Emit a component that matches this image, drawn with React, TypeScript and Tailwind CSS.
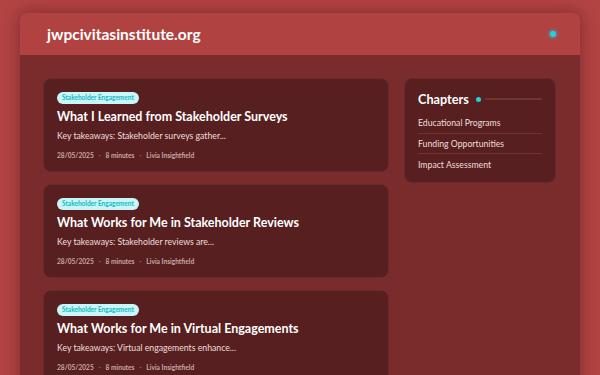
import React from "react";

const posts = [
  { title: "What I Learned from Stakeholder Surveys", excerpt: "Key takeaways: Stakeholder surveys gather..." },
  { title: "What Works for Me in Stakeholder Reviews", excerpt: "Key takeaways: Stakeholder reviews are..." },
  { title: "What Works for Me in Virtual Engagements", excerpt: "Key takeaways: Virtual engagements enhance..." },
];

export default function App() {
  return (
    <div
      className="w-[600px] h-[375px] overflow-hidden bg-[#b34444] px-[20px] pt-[13px]"
      style={{ fontFamily: "Lato, 'Noto Sans', sans-serif" }}
    >
      <div className="rounded-t-[6px] shadow-[0_0_18px_rgba(60,10,10,0.45)] overflow-hidden h-[400px] bg-[#7a2c2c]">
        <header className="h-[42px] bg-[#b04242] flex items-center justify-between pl-[27px] pr-[24px]">
          <span className="text-white font-bold text-[15.5px] leading-[20px]">jwpcivitasinstitute.org</span>
          <span className="w-[6px] h-[6px] rounded-full bg-[#1fd3db] shadow-[0_0_4px_#22d3ee]" />
        </header>
        <div className="flex gap-[15px] pl-[23px] pr-[24px] pt-[23px]">
          <div className="w-[346px] flex flex-col gap-[12px]">
            {posts.map((p) => (
              <article
                key={p.title}
                className="rounded-[8px] bg-[#571f1f] border border-[#6a2a2a] px-[13px] pt-[13px] h-[94px]"
              >
                <div className="flex">
                  <span className="flex items-center h-[12px] px-[5px] rounded-full bg-[#c9f6f8] text-[#14b8c4] text-[6.5px] leading-[12px] font-bold">
                    Stakeholder Engagement
                  </span>
                </div>
                <h2 className="text-white font-bold text-[12.5px] leading-[16px] mt-[5px]">{p.title}</h2>
                <p className="text-[#f0dede] text-[8.7px] leading-[12px] mt-[5px]">{p.excerpt}</p>
                <div className="flex items-center gap-[5px] text-[#c9a8a8] text-[6.6px] leading-[10px] font-bold mt-[8px]">
                  <span>28/05/2025</span>
                  <span className="text-[#9a6a6a]">·</span>
                  <span>8 minutes</span>
                  <span className="text-[#9a6a6a]">·</span>
                  <span>Livia Insightfield</span>
                </div>
              </article>
            ))}
          </div>
          <aside className="w-[152px] h-[105px] rounded-[8px] bg-[#571f1f] border border-[#6a2a2a] px-[13px] pt-[12px]">
            <div className="flex items-center gap-[4px]">
              <span className="text-white font-bold text-[12.7px] leading-[16px]">Chapters</span>
              <span className="w-[5px] h-[5px] rounded-full bg-[#1fd3db] ml-[3px]" />
              <span className="flex-1 h-[2px] bg-[#6e3333] rounded" />
            </div>
            <ul className="mt-[6px] text-[#f0dede] text-[8.7px]">
              <li className="h-[21px] flex items-center border-b border-[#6e3333]">Educational Programs</li>
              <li className="h-[20px] flex items-center border-b border-[#6e3333]">Funding Opportunities</li>
              <li className="h-[21px] flex items-center">Impact Assessment</li>
            </ul>
          </aside>
        </div>
      </div>
    </div>
  );
}
